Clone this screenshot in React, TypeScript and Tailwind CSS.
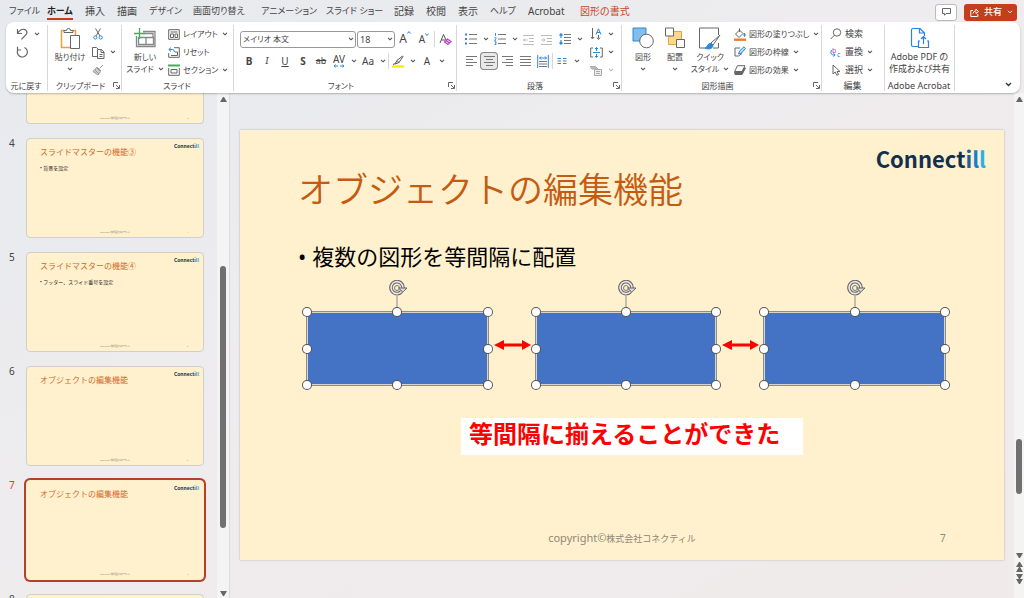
import type { ReactNode } from 'react';
import clsx from 'clsx';

const BLUE = '#2b88d8';
const GRAY = '#666';

const tabs = [
  'ファイル', 'ホーム', '挿入', '描画', 'デザイン', '画面切り替え', 'アニメーション',
  'スライド ショー', '記録', '校閲', '表示', 'ヘルプ', 'Acrobat', '図形の書式',
];

const thumbs = [
  { no: 4, title: 'スライドマスターの機能③', body: '背景を設定' },
  { no: 5, title: 'スライドマスターの機能④', body: 'フッター、スライド番号を設定' },
  { no: 6, title: 'オブジェクトの編集機能', body: '' },
  { no: 7, title: 'オブジェクトの編集機能', body: '' },
];

type IconProps = { w: number; h: number; children: ReactNode; stroke?: string };

const Icon = ({ w, h, children, stroke = GRAY }: IconProps) => (
  <svg width={w} height={h} viewBox={`0 0 ${w} ${h}`} fill="none" stroke={stroke} strokeWidth="1" className="shrink-0" aria-hidden="true">
    {children}
  </svg>
);

const Chevron = ({ dim = false }: { dim?: boolean }) => (
  <Icon w={6} h={4} stroke={dim ? '#bbb' : '#555'}>
    <path d="M1 .8 3 2.8 5 .8" strokeWidth="1.1" />
  </Icon>
);

const Launcher = () => (
  <Icon w={7} h={7}>
    <path d="M.5 5V.5H5M3 3l3 3M6.5 3v3.5H3" />
  </Icon>
);

const lines = (rows: [number, number][], stroke = '#777') =>
  rows.map(([x1, x2], i) => <path key={i} d={`M${x1} ${1.5 + i * 3}H${x2}`} stroke={stroke} />);

/* ---- ribbon icons ---- */

const UndoIcon = () => (
  <Icon w={12} h={12}>
    <path d="M1.5 1v4.5H6M1.7 5.2C3.5 2.5 5.5 1 8 1.3c2.8.4 3.8 3.5 2 5.4L5.5 11.3" strokeWidth="1.2" />
  </Icon>
);
const RedoIcon = () => (
  <Icon w={12} h={12}>
    <path d="M1.5.8V4H5M8.500 1.500a5 5 0 1 1-6.500 2" strokeWidth="1.2" />
  </Icon>
);
const PasteIcon = () => (
  <Icon w={20} h={22}>
    <path d="M4 3.5H1.5v17H10M12 3.5h3.5V8" stroke="#f0a030" strokeWidth="1.5" />
    <path d="M4 5.5V3.5h2.5a2 2 0 0 1 4 0H13v2z" fill="#fff" />
    <path d="M10.5 8.5h9v13h-9z" fill="#fff" />
  </Icon>
);
const CutIcon = () => (
  <Icon w={10} h={12}>
    <path d="M2.5.5 7 8M7.5.5 3 8" />
    <circle cx="2.3" cy="9.5" r="1.6" stroke={BLUE} />
    <circle cx="7.7" cy="9.5" r="1.6" stroke={BLUE} />
  </Icon>
);
const CopyIcon = () => (
  <Icon w={13} h={13}>
    <path d="M5 10.5H.5v-9h4L6 3" />
    <path d="M5.5 3.5h4l2.5 2.5v6.5H5.5zM9 3.5v3h3M7.5 8.5h3M7.5 10.5h3" />
  </Icon>
);
const BrushIcon = () => (
  <Icon w={12} h={12} stroke="#999">
    <path d="M11 1 7.5 4.5M5 3l4 4M4.5 3.5 8.5 7.5 6 11 1 7.5zM3 6l4 4" fill="#ccc" />
  </Icon>
);
const NewSlideIcon = () => (
  <Icon w={22} h={20}>
    <path d="M9 3.5h12v15H2.5V8M4.5 9.5h15v7h-15zM12 9.5v7M9 5.5h10v4" strokeWidth="1.3" stroke="#888" />
    <path d="M5.5 0v11M0 5.5h11" stroke="#3fae5a" strokeWidth="1.3" />
  </Icon>
);
const LayoutIcon = () => (
  <Icon w={12} h={11}>
    <path d="M.7.7h10.6v9.6H.7zM2.5 3h7M2.5 5h3v3.5h-3zM7 5h2.5v3.5H7z" />
  </Icon>
);
const ResetIcon = () => (
  <Icon w={12} h={11}>
    <path d="M6 .7h5.3v9.6H.7V6M3 8.5h6.5V5H7" />
    <path d="M3 .5.8 2.5 3 4.5M1 2.5h3.5q2 .2 2 2.5" stroke={BLUE} />
  </Icon>
);
const SectionIcon = () => (
  <Icon w={12} h={12}>
    <path d="M0 1.5h12" stroke="#3fae5a" strokeWidth="2" />
    <path d="M.7 4v7.3h10.6V4M3 5.5h6v3.5H3z" />
  </Icon>
);
const EraserIcon = () => (
  <Icon w={13} h={13}>
    <path d="M1 10 4.5 1.5 7 7M2.5 7H6" stroke="#555" />
    <path d="m5.500 9 3-3 3.500 2.500-3 3zM7 7.500l3.500 2.500" stroke="#b146c2" fill="#f3e0f7" strokeWidth="1.2" />
  </Icon>
);
const HighlightIcon = () => (
  <Icon w={12} h={13}>
    <path d="M10.5 1 5 5.5 3 9l4-1.500 4-6zM5 5.5l2 2M1 9.5l2.500-1" stroke="#555" />
    <path d="M0 11.5h12" stroke="#ffee00" strokeWidth="2.6" />
  </Icon>
);
const BulletsIcon = () => (
  <Icon w={12} h={12}>
    <path d="M4 1.5h8M4 6h8M4 10.5h8" stroke="#777" />
    <path d="M0 1.5h2M0 6h2M0 10.5h2" stroke={BLUE} strokeWidth="2" />
  </Icon>
);
const NumberingIcon = () => (
  <Icon w={12} h={12}>
    <path d="M4 1.5h8M4 6h8M4 10.5h8" stroke="#777" />
    <path d="M1.5 0v3M.5 4.7h1.5v1L.6 7.3H2M.5 8.7h1.5v2.8H.5M1 10h1" stroke={BLUE} strokeWidth=".9" />
  </Icon>
);
const IndentIcon = ({ flip = false }: { flip?: boolean }) => (
  <Icon w={12} h={11} stroke="#bbb">
    <path d="M0 1.5h11M6 4.5h5M6 7.5h5M0 10.5h11" />
    <path d={flip ? 'M0 6h4M2.5 4.5 4 6 2.5 7.5' : 'M4.5 6h-4M2 4.5.5 6 2 7.5'} />
  </Icon>
);
const SpacingIcon = () => (
  <Icon w={12} h={12}>
    <path d="M5 1.5h7M5 4.5h7M5 7.5h7M5 10.5h7" stroke="#777" />
    <path d="M2 1v4M2 7v4M.5 2.5 2 .8l1.5 1.7M.5 9.5 2 11.2l1.5-1.7" stroke={BLUE} strokeWidth="1.2" />
  </Icon>
);
const AlignIcon = ({ rows }: { rows: [number, number][] }) => (
  <Icon w={11} h={12}>{lines(rows)}</Icon>
);
const DistributeIcon = () => (
  <Icon w={12} h={13}>
    <path d="M.7 0v13M11.3 0v13" stroke={BLUE} />
    <path d="M2.5 3h7M4 1.5 2.5 3 4 4.5M8 1.5 9.5 3 8 4.5" stroke={BLUE} />
    <path d="M2 6.5h8M2 9h8M2 11.5h8" stroke="#777" />
  </Icon>
);
const ColumnsIcon = () => (
  <Icon w={10} h={8} stroke={BLUE}>
    <path d="M.5 1.5h3.5M.5 4h3.5M.5 6.5h3.5M6 1.5h3.5M6 4h3.5M6 6.5h3.5" />
  </Icon>
);
const DirectionIcon = () => (
  <Icon w={11} h={12}>
    <path d="M1.5 0v10M0 9l1.5 2L3 9M7.5 7v3.5M6 9.5l1.5 2 1.5-2" />
    <path d="M5 6.5 7.5.8 10 6.5M6 4.5h3" stroke={BLUE} />
  </Icon>
);
const AlignTextIcon = () => (
  <Icon w={13} h={11}>
    <path d="M3 1H.7v9H3M10 1h2.3v9H10" />
    <path d="M3 5.5h7M6.5.5v3.5M6.5 7v3.5M5 2l1.5-1.5L8 2M5 9l1.5 1.5L8 9" stroke={BLUE} />
  </Icon>
);
const SmartArtIcon = () => (
  <Icon w={12} h={11} stroke="#aaa">
    <path d="M0 1.5h5.5L8 4H2z" fill="#bbb" />
    <path d="M4.5 4.5h7v6h-7zM6 6.5h4M6 8.5h4" fill="#eee" />
  </Icon>
);
const ShapesIcon = () => (
  <Icon w={22} h={22}>
    <path d="M1 1h13v13H1z" fill="#83bdec" stroke={BLUE} />
    <circle cx="14.5" cy="14" r="6.8" fill="#fff" />
  </Icon>
);
const ArrangeIcon = () => (
  <Icon w={22} h={22}>
    <path d="M4.5 4.5h13v13h-13z" fill="#fbd88f" stroke="#f0a030" />
    <path d="M1.5 1h8v8h-8zM12.5 12.5h8v8h-8z" fill="#fff" />
  </Icon>
);
const QuickStyleIcon = () => (
  <Icon w={24} h={23}>
    <path d="M8 21H1.5V1h19v7M15 21h5.5v-5" fill="#fff" />
    <path d="m22 8-9 8 2 2z" fill="#fff" />
    <path d="M13 16.5c-3-1-3 3.5-6 4.5 4 2 8 .5 8-2.8z" fill={BLUE} stroke={BLUE} />
  </Icon>
);
const FillIcon = () => (
  <Icon w={12} h={13}>
    <path d="M5.5 2 1.5 6l3.5 3.5L9 5.5zM5.5.3V4" />
    <path d="M10.3 5q1.7 2.5.2 3.5-1-.8-.2-3.5z" fill={BLUE} stroke={BLUE} />
    <path d="M0 11.7h12" stroke="#ed7d31" strokeWidth="2.4" />
  </Icon>
);
const OutlineIcon = () => (
  <Icon w={12} h={12}>
    <path d="M6 2H1v8h3.5L8 7.5" />
    <path d="M10 .8 5.5 5 4.5 8l3-1L11.5 2.5z" fill="#b5dcf8" stroke={BLUE} />
  </Icon>
);
const EffectIcon = () => (
  <Icon w={12} h={10}>
    <path d="M4 3h7.5L8 9.5H1L.7 7z" fill="#666" />
    <path d="M3.5.7H11L8 6.5H.7z" fill="#fff" />
  </Icon>
);
const SearchIcon = () => (
  <Icon w={12} h={12}>
    <circle cx="7" cy="4.5" r="3.7" />
    <path d="M4.3 7.3.7 11" />
  </Icon>
);
const ReplaceIcon = () => (
  <svg width="12" height="14" viewBox="0 0 12 14" className="shrink-0" aria-hidden="true">
    <path d="M1.5 5Q-.5 8.500 2.500 10H5M3.500 8.300 5.200 10l-1.700 1.700" fill="none" stroke={BLUE} />
    <text x="2" y="8" fontSize="7" fontFamily="Noto Sans" fill="#b146c2">b</text>
    <text x="7" y="12" fontSize="7" fontFamily="Noto Sans" fill={BLUE}>c</text>
  </svg>
);
const SelectIcon = () => (
  <Icon w={9} h={12}>
    <path d="M1 1v9l2.2-2 1.6 3.3L6.5 10.500 5 7.500h3z" />
  </Icon>
);
const PdfIcon = () => (
  <Icon w={20} h={22} stroke="#2d7fe0">
    <path d="M8 19.5H3q-1.5 0-1.5-1.500V3Q1.5 1.5 3 1.5h7l4.500 4.500v3M9.500 1.500V6h5" strokeWidth="1.2" />
    <path d="M10 14H8.500v6.500h10V14H17M13.500 17v-7M11 12l2.500-2.500L16 12" strokeWidth="1.2" />
  </Icon>
);

/* ---- ribbon building blocks ---- */

type GroupProps = { label: string; width: string; launcher?: boolean; children: ReactNode };

const Group = ({ label, width, launcher = false, children }: GroupProps) => (
  <section aria-label={label} className={clsx('mt-[3px] mb-0.5 flex shrink-0 flex-col border-r border-[#d8d8d8]', width)}>
    <div className="flex h-[55px] shrink-0">{children}</div>
    <div className="flex flex-1 items-center pr-px">
      <span className="flex-1 text-center leading-[11px] whitespace-nowrap">{label}</span>
      {launcher && <button aria-label={`${label}の詳細`}><Launcher /></button>}
    </div>
  </section>
);

type ToolProps = { label: string; menu?: boolean; dim?: boolean; active?: boolean; children: ReactNode };

const Tool = ({ label, menu = false, dim = false, active = false, children }: ToolProps) => (
  <button aria-label={label} className={clsx('flex h-[18px] items-center', menu ? 'w-[29px]' : 'w-[18px]', active && 'rounded-sm bg-[#e8e8e8] ring-1 ring-inset ring-[#888]')}>
    <span className="flex w-[18px] justify-center">{children}</span>
    {menu && <span className="flex w-[11px] justify-center"><Chevron dim={dim} /></span>}
  </button>
);

const TextTool = ({ icon, text, menu = false }: { icon: ReactNode; text: string; menu?: boolean }) => (
  <button className="flex h-[18px] items-center whitespace-nowrap">
    <span className="mr-px flex w-4 shrink-0 justify-center">{icon}</span>
    <span>{text}</span>
    {menu && <span className="ml-1"><Chevron /></span>}
  </button>
);

type BigProps = { icon: ReactNode; text: string; second?: string; menu?: boolean; width: string };

const BigTool = ({ icon, text, second, menu = false, width }: BigProps) => (
  <button className={clsx('flex flex-col items-center leading-3 whitespace-nowrap', width)}>
    <span className="flex h-[26px] items-center">{icon}</span>
    <span>{text}</span>
    <span className="flex h-3 items-center gap-1">
      {second}
      {menu && <Chevron />}
    </span>
  </button>
);

const Divider = () => <span className="h-4 w-px bg-[#d8d8d8]" />;

const Select = ({ label, value, width }: { label: string; value: string; width: string }) => (
  <div className={clsx('relative', width)}>
    <select aria-label={label} className="h-[17px] w-full appearance-none rounded-[3px] border border-[#999] bg-white pl-0.5 leading-none">
      <option>{value}</option>
    </select>
    <span className="pointer-events-none absolute inset-y-0 right-0.5 flex items-center"><Chevron /></span>
  </div>
);

// long and kana-only tab names are set one step smaller
const isSmallTab = (t: string) => /^[ァ-ー ]+$/.test(t) || t.length > 5;

const TitleBar = () => (
  <header className="flex h-[22px] shrink-0 items-center justify-between pt-0.5 pr-[7px] pl-[9px] text-[10px]">
    <nav className="grid grid-cols-[38px_38px_32px_32px_44px_68px_65px_68px_32px_32px_32px_38px_52px_60px] whitespace-nowrap">
      {tabs.map((t) => (
        <a
          key={t}
          href="#"
          className={clsx(
            'justify-self-start border-b-2 leading-[14px]',
            isSmallTab(t) && t !== 'Acrobat' && 'text-[9px]',
            t === 'ホーム' ? 'border-[#c43e1c] font-bold text-[#222]' : 'border-transparent',
            t === '図形の書式' && 'text-[#c8472a]',
          )}
        >
          {t}
        </a>
      ))}
    </nav>
    <div className="flex gap-[7px]">
      <button aria-label="コメント" className="flex h-[17px] w-[22px] items-center justify-center rounded-[3px] border border-[#bbb] bg-white">
        <Icon w={9} h={8}><path d="M.5.5h8v5H4L2.5 7.3V5.5h-2z" /></Icon>
      </button>
      <button className="flex h-[17px] w-[53px] items-center justify-between rounded-[3px] bg-[#c43e1c] pr-1 pl-1.5 text-[9px] font-medium text-white">
        <Icon w={9} h={9} stroke="#fff"><path d="M3 2.5H.8v6h7V6M3 5.5Q3.5 3 6 2.8V1l2.5 2.5L6 5.5V4" /></Icon>
        共有
        <Icon w={6} h={4} stroke="#fff"><path d="M1 .8 3 2.8 5 .8" /></Icon>
      </button>
    </div>
  </header>
);

const Ribbon = () => (
  <div className="z-10 mr-1 ml-1.5 flex h-[71px] shrink-0 rounded-lg bg-white text-[8px] shadow-[0_1px_2px_rgba(0,0,0,0.25)]">
    <Group label="元に戻す" width="w-[42px]">
      <div className="pl-[7px]">
        <Tool label="元に戻す" menu><UndoIcon /></Tool>
        <Tool label="やり直し"><RedoIcon /></Tool>
      </div>
    </Group>

    <Group label="クリップボード" width="w-[74px]" launcher>
      <BigTool icon={<PasteIcon />} text="貼り付け" menu width="w-[38px] ml-[3px]" />
      <div>
        <Tool label="切り取り"><CutIcon /></Tool>
        <Tool label="コピー" menu><CopyIcon /></Tool>
        <Tool label="書式のコピー"><BrushIcon /></Tool>
      </div>
    </Group>

    <Group label="スライド" width="w-[112px]">
      <BigTool icon={<NewSlideIcon />} text="新しい" second="スライド" menu width="w-[38px] ml-1" />
      <div className="ml-0.5">
        <TextTool icon={<LayoutIcon />} text="レイアウト" menu />
        <TextTool icon={<ResetIcon />} text="リセット" />
        <TextTool icon={<SectionIcon />} text="セクション" menu />
      </div>
    </Group>

    <Group label="フォント" width="w-[223px]" launcher>
      <div className="flex flex-col gap-1 pt-[5px] pl-1.5 text-[#444]">
        <div className="flex h-[18px] items-center gap-px">
          <Select label="フォント" value="メイリオ 本文" width="w-[116px]" />
          <Select label="サイズ" value="18" width="w-[38px] text-[9px]" />
          <Tool label="拡大"><span className="text-[12px]">A</span><Icon w={4} h={5} stroke={BLUE}><path d="m.5 3.5 1.500-2 1.500 2" /></Icon></Tool>
          <Tool label="縮小"><span className="text-[10px]">A</span><Icon w={4} h={5} stroke={BLUE}><path d="m.5 1.5 1.500 2 1.500-2" /></Icon></Tool>
          <Divider />
          <Tool label="書式のクリア"><EraserIcon /></Tool>
        </div>
        <div className="flex h-[18px] items-center text-[10px]">
          <Tool label="太字"><b>B</b></Tool>
          <Tool label="斜体"><i className="font-serif">I</i></Tool>
          <Tool label="下線"><u>U</u></Tool>
          <Tool label="影"><b>S</b></Tool>
          <Tool label="取り消し線"><s className="text-[9px]">ab</s></Tool>
          <Tool label="文字の間隔" menu>
            <span className="flex flex-col items-center leading-[9px]">
              AV
              <Icon w={12} h={4} stroke={BLUE}><path d="M1 2h4M7 2h4M2.5.5 1 2l1.5 1.5M9.5.5 11 2 9.5 3.5" /></Icon>
            </span>
          </Tool>
          <Tool label="文字種の変換" menu>Aa</Tool>
          <Divider />
          <Tool label="蛍光ペン" menu><HighlightIcon /></Tool>
          <Tool label="フォントの色" menu>A</Tool>
        </div>
      </div>
    </Group>

    <Group label="段落" width="w-[165px]" launcher>
      <div className="flex flex-col gap-1 pt-[5px] pl-[5px]">
        <div className="flex h-[18px]">
          <Tool label="箇条書き" menu><BulletsIcon /></Tool>
          <Tool label="段落番号" menu><NumberingIcon /></Tool>
          <Tool label="インデントを減らす"><IndentIcon /></Tool>
          <Tool label="インデントを増やす"><IndentIcon flip /></Tool>
          <Tool label="行間" menu><SpacingIcon /></Tool>
        </div>
        <div className="flex h-[18px] items-center">
          <Tool label="左揃え"><AlignIcon rows={[[0, 11], [0, 7], [0, 11], [0, 7]]} /></Tool>
          <Tool label="中央揃え" active><AlignIcon rows={[[0, 11], [2, 9], [0, 11], [2, 9]]} /></Tool>
          <Tool label="右揃え"><AlignIcon rows={[[0, 11], [4, 11], [0, 11], [4, 11]]} /></Tool>
          <Tool label="両端揃え"><AlignIcon rows={[[0, 11], [0, 11], [0, 11], [0, 11]]} /></Tool>
          <Tool label="均等割り付け"><DistributeIcon /></Tool>
          <Divider />
          <Tool label="段組み" menu><ColumnsIcon /></Tool>
        </div>
      </div>
      <div className="ml-0.5">
        <Tool label="文字列の方向" menu><DirectionIcon /></Tool>
        <Tool label="文字の配置" menu><AlignTextIcon /></Tool>
        <Tool label="SmartArt に変換" menu dim><SmartArtIcon /></Tool>
      </div>
    </Group>

    <Group label="図形描画" width="w-[200px]" launcher>
      <BigTool icon={<ShapesIcon />} text="図形" menu width="w-8 ml-[5px]" />
      <BigTool icon={<ArrangeIcon />} text="配置" menu width="w-8" />
      <BigTool icon={<QuickStyleIcon />} text="クイック" second="スタイル" menu width="w-[38px]" />
      <div className="ml-[3px]">
        <TextTool icon={<FillIcon />} text="図形の塗りつぶし" menu />
        <TextTool icon={<OutlineIcon />} text="図形の枠線" menu />
        <TextTool icon={<EffectIcon />} text="図形の効果" menu />
      </div>
    </Group>

    <Group label="編集" width="w-[63px] text-[9px]">
      <div className="ml-1.5">
        <TextTool icon={<SearchIcon />} text="検索" />
        <TextTool icon={<ReplaceIcon />} text="置換" menu />
        <TextTool icon={<SelectIcon />} text="選択" menu />
      </div>
    </Group>

    <Group label="Adobe Acrobat" width="w-[70px] text-[9px]">
      <BigTool icon={<PdfIcon />} text="Adobe PDF の" second="作成および共有" width="w-full" />
    </Group>

    <div className="flex flex-1 items-end justify-end pr-2 pb-1.5">
      <button aria-label="リボンを折りたたむ">
        <Icon w={7} h={5} stroke="#333"><path d="M1 1l2.5 2.5L6 1" strokeWidth="1.3" /></Icon>
      </button>
    </div>
  </div>
);

/* ---- slide list ---- */

const Logo = ({ className }: { className: string }) => (
  <span className={clsx("font-['Noto_Sans_CJK_JP',sans-serif] font-bold text-[#12304d]", className)}>
    Connect<span className="text-[#1f5f99]">i</span><span className="text-[#1680d0]">l</span><span className="text-[#2bb0e8]">l</span>
  </span>
);

const ThumbFooter = ({ no }: { no: number }) => (
  <div className="mt-auto flex pb-[3px] text-[2px] leading-[3px] text-[#857c66]">
    <span className="flex-1 pl-4 text-center">copyright©株式会社コネクティル</span>
    <span className="w-4">{no}</span>
  </div>
);

const Arrow = ({ up = false }: { up?: boolean }) => (
  <svg width="7" height="5" viewBox="0 0 7 5" className="shrink-0" fill="#666" aria-hidden="true">
    <path d={up ? 'M0 5 3 0h1l3 5z' : 'M0 0 3 5h1l3-5z'} />
  </svg>
);

const SlideList = () => (
  <aside className="flex w-[230px] shrink-0 border-r border-[#dcdcde]">
    <ol className="flex min-w-0 flex-1 flex-col gap-3.5 overflow-hidden pr-[13px] pl-[9px]">
      <li className="ml-[17px] flex h-[31px] shrink-0 flex-col rounded-b border border-t-0 border-[#cfcfcf] bg-[#fff1ce]">
        <ThumbFooter no={3} />
      </li>
      {thumbs.map(({ no, title, body }) => (
        <li key={no} className="flex h-[100px] shrink-0">
          <span className={clsx('w-[17px] text-[10px] leading-[10px]', no === 7 ? 'text-[#c8472a]' : 'text-[#444]')}>{no}</span>
          <div className={clsx('flex min-w-0 flex-1 flex-col rounded border bg-[#fff1ce]', no === 7 ? 'border-[#fff1ce] ring-2 ring-[#b7402a]' : 'border-[#cfcfcf]')}>
            <div className="flex items-start justify-between pt-[3px] pr-1 pl-[13px]">
              <span className="mt-1 text-[8px] leading-3 whitespace-nowrap text-[#cf6a2c] [font-feature-settings:normal]">{title}</span>
              <Logo className="text-[5px] leading-[8px]" />
            </div>
            {body && <p className="mt-1.5 pl-[13px] text-[5px] leading-[8px] text-[#222] [font-feature-settings:normal]">• {body}</p>}
            <ThumbFooter no={no} />
          </div>
        </li>
      ))}
      <li className="flex h-[100px] shrink-0">
        <span className="w-[17px] text-[10px] leading-[10px] text-[#444]">8</span>
        <div className="flex-1 rounded border border-[#cfcfcf] bg-[#fff1ce]" />
      </li>
    </ol>
    <div className="flex w-3 shrink-0 flex-col items-center bg-[#f4f4f4] pt-1 pb-0.5">
      <Arrow up />
      <div className="flex-[164]" />
      <div className="w-1.5 flex-[262] rounded-full bg-[#707070]" />
      <div className="flex-[63]" />
      <Arrow />
    </div>
  </aside>
);

/* ---- slide ---- */

const handles = [
  'top-0 left-0', 'top-0 left-1/2', 'top-0 left-full', 'top-1/2 left-0',
  'top-1/2 left-full', 'top-full left-0', 'top-full left-1/2', 'top-full left-full',
];

const SelectedShape = () => (
  <div className="relative h-[75px] flex-1 border border-[#8c8c8c] bg-[#4472c4] ring-1 ring-[#d8d4c8] ring-inset">
    <svg width="20" height="32" viewBox="0 0 20 32" fill="none" className="absolute bottom-full left-1/2 -ml-[9px]" aria-hidden="true">
      <path d="M9 16v16" stroke="#8a8a8a" />
      <path d="M13.6 11.5A6 6 0 1 1 15 8" stroke="#666" strokeWidth="3.6" />
      <path d="M13.6 11.5A6 6 0 1 1 15 8" stroke="#e8e8e8" strokeWidth="1.6" />
      <circle cx="9" cy="8" r="2.5" stroke="#777" />
      <path d="M10.5 8H19l-4.2 4z" fill="#ddd" stroke="#666" />
    </svg>
    {handles.map((h) => (
      <span key={h} className={clsx('absolute size-2 -translate-1/2 rounded-full bg-white ring-1 ring-[#555]', h)} />
    ))}
  </div>
);

const RedArrow = () => (
  <svg width="46" height="74" viewBox="0 0 46 74" className="shrink-0" fill="#f00" aria-hidden="true">
    <path d="M5 34l10-5v3.500h18V29l9 5-9 5v-3.500H15V39z" />
  </svg>
);

const Slide = () => (
  <article className="mx-[10px] mt-[37px] flex aspect-video flex-col bg-[#fff1ce] shadow-[0_0_2px_rgba(0,0,0,0.25)]">
    <div className="flex items-start justify-between pr-[18px] pl-[58px]">
      <h1 className="mt-9 text-[35px] leading-[48px] font-[350] whitespace-nowrap text-[#c55a11]">オブジェクトの編集機能</h1>
      <Logo className="mt-[15px] text-[22px] leading-[26px]" />
    </div>
    <ul className="mt-[27px] pl-[58px] text-[22px] leading-[30px] text-black">
      <li className="flex gap-1.5"><span>•</span>複数の図形を等間隔に配置</li>
    </ul>
    <div className="mt-10 flex pr-[58px] pl-[66px]">
      <SelectedShape />
      <RedArrow />
      <SelectedShape />
      <RedArrow />
      <SelectedShape />
    </div>
    <p className="mt-8 ml-[221px] w-[342px] bg-white pb-[5px] pl-2 text-[24px] leading-8 font-bold text-[#f00]">等間隔に揃えることができた</p>
    <footer className="mt-auto flex pb-[13px] pl-16 text-[9px] leading-4 text-[#8e8776]">
      <span className="flex-1 text-center"><span className="text-[11px]">copyright©</span>株式会社コネクティル</span>
      <span className="w-16 text-[10px]">7</span>
    </footer>
  </article>
);

export default function App() {
  return (
    <div className="flex h-screen flex-col overflow-hidden bg-linear-to-br from-[#e6eaee] via-[#efecee] to-[#f0eaea] font-['Noto_Sans','Noto_Sans_CJK_JP',sans-serif] text-[#444] [font-feature-settings:'palt']">
      <TitleBar />
      <Ribbon />
      <main className="flex min-h-0 flex-1">
        <SlideList />
        <div className="min-w-0 flex-1 overflow-hidden [font-feature-settings:normal]">
          <Slide />
        </div>
        <div className="flex w-[10px] shrink-0 flex-col items-center bg-[#f4f4f4] pt-1">
          <Arrow up />
          <div className="flex-[336]" />
          <div className="w-1.5 flex-[55] rounded-full bg-[#707070]" />
          <div className="flex-[59]" />
          <Arrow />
          <div className="flex w-full flex-col items-center pt-1 pb-3.5">
            <Arrow up />
            <Arrow up />
            <span className="h-0.5" />
            <Arrow />
            <Arrow />
          </div>
        </div>
      </main>
    </div>
  );
}
